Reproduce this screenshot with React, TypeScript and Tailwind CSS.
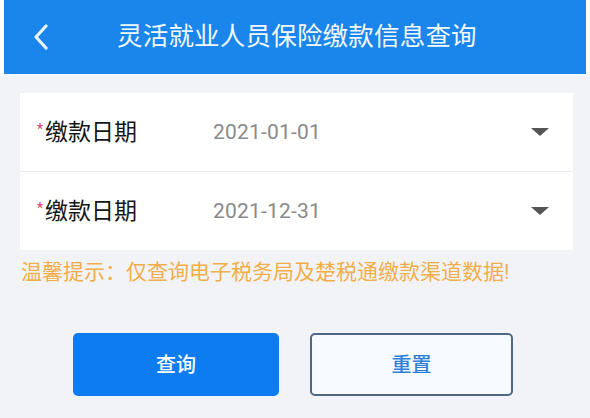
import { useState } from "react";

const fontStack = "font-['Roboto','Noto_Sans_CJK_SC',sans-serif]";

const DateRow = ({ label, value, last }: { label: string; value: string; last?: boolean }) => {
  return (
    <div
      className={`flex flex-row items-center pl-[17px] pr-[24px] ${last ? "h-[78px]" : "h-[79px] border-b border-[#ececf0]"}`}
    >
      <div className="w-[176px] flex flex-row items-center">
        <span className="text-[#e2336b] text-[14px] leading-none mr-[2px] -mt-[6px]">*</span>
        <span className="text-[23px] text-[#161616] leading-none">{label}</span>
      </div>
      <span className="flex-1 text-[21px] text-[#8a8a8a] leading-none tracking-[0.2px]">{value}</span>
      <svg width="18" height="9" viewBox="0 0 18 9">
        <path d="M0 0 L18 0 L9 8 Z" fill="#555" />
      </svg>
    </div>
  );
};

const App = () => {
  const [start] = useState("2021-01-01");
  const [end] = useState("2021-12-31");

  return (
    <div className={`w-[590px] h-[418px] bg-[#f2f3f7] flex flex-col ${fontStack}`}>
      <div className="bg-white px-[4px]">
        <div className="h-[74px] bg-[#1a86ec] flex flex-row items-center relative">
          <svg className="ml-[29px]" width="16" height="26" viewBox="0 0 16 26">
            <path d="M13 2 L3 13 L13 24" fill="none" stroke="#eaf4ff" strokeWidth="3.2" strokeLinecap="round" strokeLinejoin="round" />
          </svg>
          <span className="absolute left-[113px] text-[25.5px] text-[#f4f9ff] leading-none tracking-[0.2px]">
            灵活就业人员保险缴款信息查询
          </span>
        </div>
      </div>
      <div className="h-[2px] bg-[#f7f9fc]" />

      <div className="mt-[17px] ml-[20px] w-[553px] bg-white flex flex-col">
        <DateRow label="缴款日期" value={start} />
        <DateRow label="缴款日期" value={end} last />
      </div>

      <p className="ml-[21px] mt-[11px] text-[21px] leading-[22px] text-[#f2ae48]">
        温馨提示：仅查询电子税务局及楚税通缴款渠道数据!
      </p>

      <div className="mt-[50px] ml-[73px] flex flex-row gap-[31px]">
        <button className="w-[206px] h-[63px] rounded-[5px] bg-[#0d7cf0] text-white text-[20px] font-medium">
          查询
        </button>
        <button className="w-[203px] h-[63px] rounded-[5px] border-2 border-[#4d6986] bg-[#f7fbff] text-[#2f7fd9] text-[20px] font-medium">
          重置
        </button>
      </div>
    </div>
  );
};

export default App;
